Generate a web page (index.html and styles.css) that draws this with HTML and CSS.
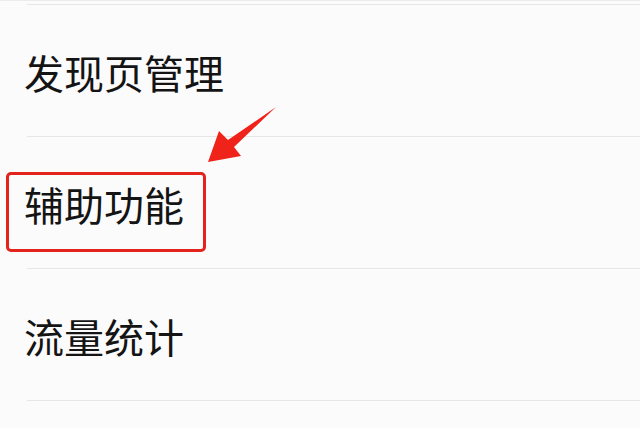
FILE: index.html
```html
<!DOCTYPE html>
<html lang="zh-CN">
<head>
  <meta charset="UTF-8" />
  <meta name="viewport" content="width=device-width, initial-scale=1.0" />
  <title>设置</title>
  <link rel="stylesheet" href="styles.css">
</head>
<body>
  <div class="page">
    <ul class="menu">
      <li class="menu-item"><span class="menu-label">发现页管理</span></li>
      <li class="menu-item"><span class="menu-label">辅助功能</span></li>
      <li class="menu-item"><span class="menu-label">流量统计</span></li>
    </ul>

    <!-- annotation over the list -->
    <div class="mark-box"></div>
    <svg class="mark-arrow" width="640" height="428" viewBox="0 0 640 428">
      <polygon points="208,162 219,131 228,140 276,107 234,147 241,156" fill="#f0231b" />
    </svg>
  </div>
</body>
</html>
```

FILE: styles.css
```css
body {
  margin: 0;
  background: #fbfbfb;
  font-family: "Noto Sans CJK SC", "Noto Sans", sans-serif;
  color: #141414;
}
.page {
  position: relative;
  width: 640px;
  height: 428px;
  overflow: hidden;
}
.menu {
  list-style: none;
  margin: 0;
  padding: 3px 0 0;
  border-top: 1px solid #ececec;
}
.menu-item {
  display: flex;
  align-items: center;
  height: 132px;
  margin-left: 27px;
  padding-top: 3px;
  box-sizing: border-box;
  border-top: 1px solid #e6e6e6;
  font-size: 40px;
  line-height: 1;
}
.menu-item:last-child {
  border-bottom: 1px solid #e6e6e6;
  height: 133px;
}
.menu-label {
  margin-left: -3px;
}
.mark-box {
  position: absolute;
  left: 6px;
  top: 172px;
  width: 200px;
  height: 80px;
  box-sizing: border-box;
  border: 3px solid #e3241c;
  border-radius: 5px;
}
.mark-arrow {
  position: absolute;
  left: 0;
  top: 0;
}
```
